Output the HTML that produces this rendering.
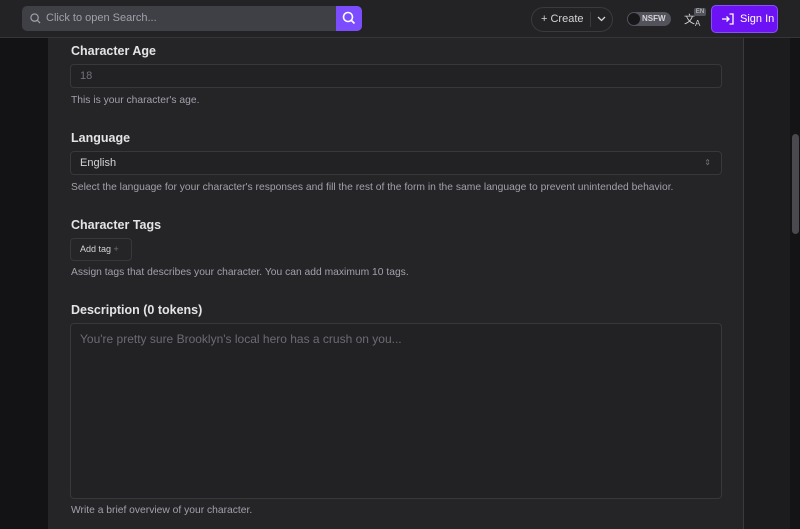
<!DOCTYPE html>
<html><head><style>
*{box-sizing:border-box;margin:0;padding:0}
body{width:800px;height:529px;overflow:hidden;background:#1c1c1f;font-family:"Liberation Sans",sans-serif;position:relative;color:#e4e4e7}
.left{position:absolute;left:0;top:38px;width:48px;height:491px;background:#131315}
.main{position:absolute;left:48px;top:38px;width:696px;height:491px;background:#252528;border-right:1px solid #3a3a3e}
.sb{position:absolute;left:790px;top:38px;width:10px;height:491px;background:#141416}
.thumb{position:absolute;left:792px;top:134px;width:7px;height:100px;background:#4a4a4e;border-radius:4px}
.hdr{position:absolute;left:0;top:0;width:800px;height:38px;background:#232326;border-bottom:1px solid #36363a}
.search{position:absolute;left:22px;top:6px;width:340px;height:25px;background:#3f3f46;border-radius:5px;font-size:11px;color:#a1a1aa;line-height:25px;padding-left:24px}
.sbtn{position:absolute;right:0;top:0;width:26px;height:25px;background:#7c4dff;border-radius:0 5px 5px 0}
.lbl{position:absolute;left:71px;font-size:12.5px;font-weight:bold;color:#e4e4e7}
.inp{position:absolute;left:70px;width:652px;border:1px solid #38383c;border-radius:4px;background:#222225;font-size:11px;padding-left:9px}
.help{position:absolute;left:71px;font-size:10.3px;color:#a1a1aa}
</style></head><body>
<div class="hdr">
 <div class="search"><svg style="position:absolute;left:8px;top:7px" width="11" height="11" viewBox="0 0 12 12" fill="none" stroke="#a1a1aa" stroke-width="1.3"><circle cx="5" cy="5" r="4"/><path d="M8 8l3 3"/></svg>Click to open Search...
  <div class="sbtn"><svg style="position:absolute;left:6px;top:5px" width="14" height="14" viewBox="0 0 14 14" fill="none" stroke="#fff" stroke-width="1.6"><circle cx="6" cy="6" r="4.5"/><path d="M9.5 9.5l3 3"/></svg></div>
 </div>
 <div style="position:absolute;left:531px;top:7px;width:82px;height:25px;border:1px solid #3a3a3e;border-radius:13px;font-size:11px;color:#d4d4d8;line-height:23px;padding-left:9px">+ Create<span style="position:absolute;left:58px;top:4px;width:1px;height:15px;background:#3a3a3e"></span><svg style="position:absolute;left:65px;top:8px" width="9" height="6" viewBox="0 0 9 6" fill="none" stroke="#d4d4d8" stroke-width="1.3"><path d="M1 1l3.5 3.5L8 1"/></svg></div>
 <div style="position:absolute;left:627px;top:12px;width:44px;height:14px;background:#52525b;border-radius:7px;font-size:8px;font-weight:bold;color:#d4d4d8;line-height:14px;padding-left:15px">NSFW<span style="position:absolute;left:1px;top:1px;width:12px;height:12px;border-radius:6px;background:#18181b"></span></div>
 <div style="position:absolute;left:684px;top:11px;font-size:11px;color:#d4d4d8">文<sub style="font-size:8px">A</sub></div>
 <div style="position:absolute;left:694px;top:8px;width:12px;height:8px;background:#52525b;border-radius:2px;font-size:6px;color:#d4d4d8;text-align:center;line-height:8px">EN</div>
 <div style="position:absolute;left:711px;top:5px;width:67px;height:28px;background:#6d12f5;border:1px solid #8a4dff;border-radius:5px;font-size:11px;color:#fff;line-height:26px;padding-left:28px"><svg style="position:absolute;left:9px;top:7px" width="13" height="12" viewBox="0 0 13 12" fill="none" stroke="#fff" stroke-width="1.3"><path d="M1 6h7M5.5 3.5L8 6 5.5 8.5M8.5 1H12v10H8.5"/></svg>Sign In</div>
</div>
<div class="left"></div>
<div class="main"></div>
<div class="sb"></div><div class="thumb"></div>
<div class="lbl" style="top:44px">Character Age</div>
<div class="inp" style="top:64px;height:24px;line-height:22px;color:#71717a">18</div>
<div class="help" style="top:95px">This is your character's age.</div>
<div class="lbl" style="top:131px">Language</div>
<div class="inp" style="top:151px;height:24px;line-height:22px;color:#d4d4d8">English<span style="position:absolute;right:10px;top:0;font-size:8px;color:#71717a">⇕</span></div>
<div class="help" style="top:182px">Select the language for your character's responses and fill the rest of the form in the same language to prevent unintended behavior.</div>
<div class="lbl" style="top:218px">Character Tags</div>
<div style="position:absolute;left:70px;top:238px;width:62px;height:23px;border:1px solid #38383c;border-radius:4px;font-size:9px;color:#d4d4d8;line-height:21px;padding-left:9px">Add tag <span style="color:#71717a">+</span></div>
<div class="help" style="top:267px">Assign tags that describes your character. You can add maximum 10 tags.</div>
<div class="lbl" style="top:303px">Description (0 tokens)</div>
<div class="inp" style="top:323px;height:176px;padding-top:8px;font-size:12px;color:#6b6b73">You're pretty sure Brooklyn's local hero has a crush on you...</div>
<div class="help" style="top:505px">Write a brief overview of your character.</div>
</body></html>
